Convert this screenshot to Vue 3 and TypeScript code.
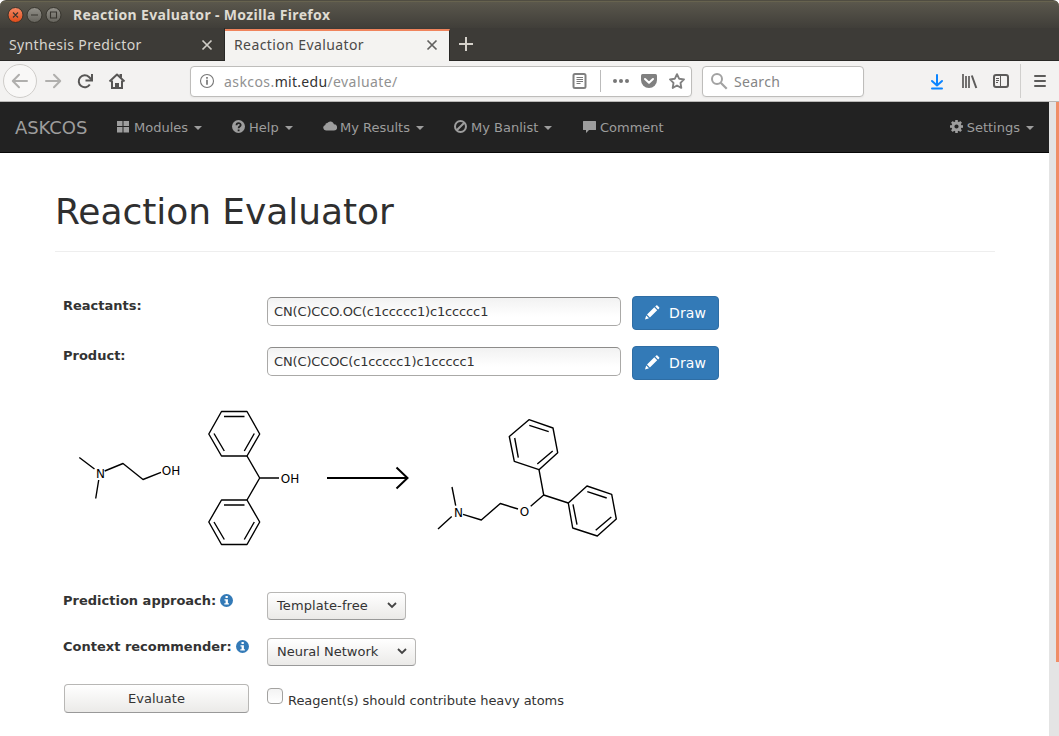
<script setup lang="ts">
interface NavItem { icon: string; label: string; caret: boolean }

const navItems: NavItem[] = [
  { icon: 'modules', label: 'Modules', caret: true },
  { icon: 'help', label: 'Help', caret: true },
  { icon: 'cloud', label: 'My Results', caret: true },
  { icon: 'ban', label: 'My Banlist', caret: true },
  { icon: 'comment', label: 'Comment', caret: false },
]

const fields = [
  { label: 'Reactants:', value: 'CN(C)CCO.OC(c1ccccc1)c1ccccc1' },
  { label: 'Product:', value: 'CN(C)CCOC(c1ccccc1)c1ccccc1' },
]

const options = [
  { label: 'Prediction approach:', value: 'Template-free', kind: 'narrow' },
  { label: 'Context recommender:', value: 'Neural Network', kind: 'wide' },
]

const gearTeeth = [0, 45, 90, 135, 180, 225, 270, 315]
</script>

<template>
  <div class="window">
    <header class="titlebar">
      <svg class="controls" width="62" height="28" viewBox="0 0 62 28">
        <defs>
          <linearGradient id="closeFill" x1="0" y1="0" x2="0" y2="1">
            <stop offset="0" stop-color="#f58a66" /><stop offset="1" stop-color="#df4a17" />
          </linearGradient>
          <linearGradient id="greyFill" x1="0" y1="0" x2="0" y2="1">
            <stop offset="0" stop-color="#93918a" /><stop offset="1" stop-color="#65635c" />
          </linearGradient>
        </defs>
        <circle cx="15.5" cy="14" r="7.5" fill="url(#closeFill)" stroke="#36322b" />
        <circle cx="34.5" cy="14" r="7.5" fill="url(#greyFill)" stroke="#36342d" />
        <circle cx="53.5" cy="14" r="7.5" fill="url(#greyFill)" stroke="#36342d" />
        <path d="M13 11.500l5 5M18 11.500l-5 5M31 14h7M50.500 11h6v6h-6z" fill="none" stroke="#37342e" stroke-width="1.100" />
      </svg>
      <span class="window-title">Reaction Evaluator - Mozilla Firefox</span>
    </header>

    <div class="tabs">
      <div class="tab">
        <span>Synthesis Predictor</span>
        <svg width="12" height="12" viewBox="0 0 12 12"><path d="M1.500 1.500l9 9M10.500 1.500l-9 9" stroke="#d0cdc7" stroke-width="1.7" /></svg>
      </div>
      <div class="tab active">
        <span>Reaction Evaluator</span>
        <svg width="12" height="12" viewBox="0 0 12 12"><path d="M1.500 1.500l9 9M10.500 1.500l-9 9" stroke="#62615f" stroke-width="1.7" /></svg>
      </div>
      <svg class="new-tab" width="16" height="16" viewBox="0 0 16 16"><path d="M1 8h14M8 1v14" stroke="#d5d1ca" stroke-width="2" /></svg>
    </div>

    <div class="toolbar">
      <svg class="nav-buttons" width="190" height="40" viewBox="0 0 190 40">
        <circle cx="20" cy="20" r="16.500" fill="#f9f8f7" stroke="#cfcdca" />
        <g fill="none" stroke-width="2" stroke-linecap="round" stroke-linejoin="round">
          <path d="M27 20H13.500M19 13.700L12.800 20l6.200 6.300" stroke="#b0afad" />
          <path d="M46 20h14M54 13.700l6.200 6.300-6.200 6.300" stroke="#b0afad" />
        </g>
        <g fill="none" stroke="#575655" stroke-width="2">
          <path d="M89.800 23.500a6 6 0 1 1-.8-7.500l2.500 2.500" />
          <path d="M92 13v6.500h-6.500" />
          <path d="M109.500 20.500L117 13.500l7.500 7" stroke-linejoin="round" />
          <path d="M112 19.500V27h10v-7.500" />
        </g>
        <path d="M115 28v-6h4v6zM119.500 15.500v-2.500h2.500v4z" fill="#575655" />
      </svg>

      <div class="address">
        <svg width="16" height="16" viewBox="0 0 16 16">
          <circle cx="8" cy="8" r="6.500" fill="none" stroke="#777" stroke-width="1.100" />
          <path d="M8 6.800v5M8 4v1.700" stroke="#777" stroke-width="1.700" />
        </svg>
        <span class="url">askcos.<b>mit.edu</b>/evaluate/</span>
        <svg class="address-actions" width="118" height="28" viewBox="0 0 118 28">
          <rect x="2.500" y="7" width="12" height="14" rx="1.500" fill="none" stroke="#808080" stroke-width="2" />
          <path d="M5.500 10.500h6.500M5.500 12.500h6.500M5.500 14.500h6.500M5.500 16.500h4" stroke="#777" />
          <path d="M29.500 3v22" stroke="#bbb" />
          <g fill="#777"><circle cx="44" cy="14" r="2" /><circle cx="50" cy="14" r="2" /><circle cx="56" cy="14" r="2" /></g>
          <path d="M71.500 7h13a1.500 1.500 0 0 1 1.500 1.500V13a8 8 0 0 1-16 0V8.500A1.500 1.500 0 0 1 71.500 7z" fill="#808080" />
          <path d="M74 12l4 3.800 4-3.800" fill="none" stroke="#fff" stroke-width="2" stroke-linecap="round" stroke-linejoin="round" />
          <path d="M106 7.200l2.100 4.500 4.900.7-3.500 3.500.8 5-4.300-2.400-4.300 2.400.8-5-3.500-3.500 4.900-.7z" fill="none" stroke="#808080" stroke-width="1.900" stroke-linejoin="round" />
        </svg>
      </div>

      <div class="search">
        <svg width="18" height="18" viewBox="0 0 18 18"><circle cx="7" cy="7" r="5" fill="none" stroke="#a2a2a2" stroke-width="2" /><path d="M10.700 10.700l6 6" stroke="#a2a2a2" stroke-width="2.200" /></svg>
        <span>Search</span>
      </div>

      <svg class="tools" width="129" height="40" viewBox="930 61 129 40">
        <g fill="none" stroke="#0a84ff" stroke-width="2" stroke-linecap="round" stroke-linejoin="round"><path d="M937 75v10.500M932 81l5 4.500 5-4.500" /><path d="M932 88.500h10" /></g>
        <path d="M963 74v14M966 76v12M969 76v12" stroke="#5c5b5a" stroke-width="1.700" />
        <path d="M971.800 75.500l4.500 12.500" stroke="#5c5b5a" stroke-width="2" />
        <rect x="994" y="75" width="14" height="12" rx="2" fill="none" stroke="#5c5b5a" stroke-width="2" />
        <path d="M1000.500 75v12M996 78.500h3M996 80.500h3M996 82.500h2" stroke="#5c5b5a" />
        <path d="M1020.500 64v34" stroke="#d0cfcd" />
        <path d="M1035 76h10M1035 81h10M1035 86h10" stroke="#5c5b5a" stroke-width="2" stroke-linecap="round" />
      </svg>
    </div>

    <div class="viewport">
      <main class="page">
        <nav class="navbar">
          <span class="brand">ASKCOS</span>
          <div v-for="item in navItems" :key="item.label" class="nav-item" :class="item.icon">
            <svg width="14" height="14" viewBox="0 0 14 14">
              <path v-if="item.icon === 'modules'" d="M0 1h5.500v5H0zM6.500 1H12v5H6.500zM0 7h5.500v5.500H0zM6.500 7H12v5.500H6.500z" fill="currentColor" />
              <g v-else-if="item.icon === 'help'">
                <circle cx="6.500" cy="6.500" r="6.500" fill="currentColor" />
                <path d="M4.500 5.200c0-2.700 4.200-2.600 4.200-.2 0 1.600-2.100 1.500-2.100 3.200M6.600 9.400v1.800" fill="none" stroke="#222" stroke-width="1.800" />
              </g>
              <path v-else-if="item.icon === 'cloud'" d="M3 10.500a2.800 2.800 0 0 1-.7-5.500 2 2 0 0 1 2-2A3.800 3.800 0 0 1 11 4.300 3.100 3.100 0 0 1 11 10.500z" fill="currentColor" />
              <g v-else-if="item.icon === 'ban'" fill="none" stroke="currentColor" stroke-width="2"><circle cx="6.500" cy="6.500" r="5.500" /><path d="M2.700 10.300l7.600-7.600" /></g>
              <path v-else d="M.5 1h12a.5.5 0 0 1 .5.5v8a.5.5 0 0 1-.5.500H6L3 13v-3H.5a.5.500 0 0 1-.5-.5v-8A.5.500 0 0 1 .5 1z" fill="currentColor" />
            </svg>
            <span>{{ item.label }}</span>
            <i v-if="item.caret" class="caret"></i>
          </div>
          <div class="nav-item settings">
            <svg width="14" height="14" viewBox="0 0 14 14">
              <circle cx="6.500" cy="6.500" r="3.500" fill="none" stroke="currentColor" stroke-width="2.800" />
              <path v-for="angle in gearTeeth" :key="angle" d="M5.200 0h2.600v3H5.200z" fill="currentColor" :transform="`rotate(${angle} 6.500 6.500)`" />
            </svg>
            <span>Settings</span>
            <i class="caret"></i>
          </div>
        </nav>

        <div class="container">
          <h1>Reaction Evaluator</h1>

          <div v-for="field in fields" :key="field.label" class="field">
            <label>{{ field.label }}</label>
            <input type="text" :value="field.value" />
            <button type="button" class="draw">
              <svg width="15" height="15" viewBox="0 0 15 15" fill="#fff">
                <path d="M0 14.500l1.200-4 2.800 2.800zM2 9.600L9.300 2.300l2.900 2.900-7.300 7.300zM10.200 1.500l1-1q.6-.6 1.200 0l1.700 1.700q.6.600 0 1.200l-1 1z" />
              </svg>
              <span>Draw</span>
            </button>
          </div>

          <svg class="reaction" width="940" height="180" viewBox="55 397 940 180">
            <g fill="none" stroke="#000" stroke-width="1.400" stroke-linejoin="round">
              <path d="M79.300 457.500L94.500 469M98.700 480L95.700 498.500M104.700 471L123 463.500L143 479.500L161 472.300" />
              <path d="M221.500 411.500H247L259.700 434L247 456H221.500L208.800 434ZM224 416.500H244.500M214 433.500L224.300 451M254.300 433.500L244.300 451" />
              <path d="M247 456L259.700 478L247 500M259.700 478H279" />
              <path d="M221.500 500H247L259.700 522L247 544.500H221.500L208.800 522ZM224 505H244.500M214 522L224.300 539.500M254.300 522L244.300 539.500" />
              <path d="M529 419.700L553 428L557.700 452.700L539 469.700L514.300 461.300L509.300 436.500ZM529.300 425.300L548.700 431.700M552.700 451L537.300 464M518.300 457.700L514.700 438" />
              <path d="M539 469.700L543.700 495L530.700 506.300M543.700 495L568.300 503" />
              <path d="M587 486L611.700 494.300L616.300 519L597.300 536L572.700 528L568.300 503ZM587.300 491.700L606.700 498M611.300 517L595.700 530.300M577 524.700L573 504.300" />
              <path d="M518 509L500.300 503.500L481.300 520L463 514.300M455.700 505.700L452 487M451.700 516.500L438 529" />
            </g>
            <path d="M327 478H407M396.500 467.500L407.500 478L396.500 488.500" fill="none" stroke="#000" stroke-width="2" />
            <g class="atoms">
              <text x="100.500" y="478">N</text><text x="171" y="475">OH</text><text x="290" y="483">OH</text>
              <text x="458.500" y="517">N</text><text x="524.500" y="516">O</text>
            </g>
          </svg>

          <div v-for="option in options" :key="option.label" class="option">
            <label>
              {{ option.label }}
              <svg width="13" height="13" viewBox="0 0 13 13"><circle cx="6.500" cy="6.500" r="6.500" fill="#337ab7" /><path d="M5.500 2h2.300v2H5.500zM4.500 5.200h3.400v4h1v1.300H4.300V9.200h1.300V6.500H4.500z" fill="#fff" /></svg>
            </label>
            <div class="select" :class="option.kind">
              <span>{{ option.value }}</span>
              <svg width="10" height="7" viewBox="0 0 10 7"><path d="M1 1l4 4 4-4" fill="none" stroke="#444" stroke-width="1.800" /></svg>
            </div>
          </div>

          <div class="submit">
            <button type="button" class="evaluate">Evaluate</button>
            <i class="checkbox"></i>
            <span>Reagent(s) should contribute heavy atoms</span>
          </div>
        </div>
      </main>
      <aside class="scrollbar"><div class="thumb"></div></aside>
    </div>
  </div>
</template>

<style>
body { margin: 0; overflow: hidden; }
</style>

<style scoped>
* { box-sizing: border-box; }
.window { width: 1059px; height: 736px; overflow: hidden; background: #fff; font-family: "DejaVu Sans", sans-serif; }
svg { display: block; flex: none; }
.titlebar, .tabs, .toolbar { font-family: "Noto Sans", sans-serif; white-space: nowrap; }
.titlebar { height: 28px; display: flex; align-items: center; background: linear-gradient(#5c594c 0, #57544a 4px, #403e39 27px); border-top: 1px solid #504d42; border-radius: 6px 6px 0 0; box-shadow: inset 0 1px #67634f; }
.window-title { margin-left: 11px; margin-top: 1px; color: #dfdbd2; font-size: 14px; font-weight: 700; line-height: 24px; letter-spacing: .34px; }
.tabs { height: 33px; display: flex; align-items: stretch; background: #3d3b37; border-bottom: 1px solid #292826; }
.tab { width: 225px; padding: 1px 11px 0 9px; display: flex; align-items: center; justify-content: space-between; color: #d8d5cf; font-size: 14px; letter-spacing: .36px; border-right: 1px solid #292826; }
.tab.active { height: 32px; color: #4b4a48; background: #f4f3f1; border-top: 2px solid #f0845c; margin-top: 1px; padding-top: 0; padding-bottom: 3px; letter-spacing: .4px; }
.new-tab { margin: 8px 0 0 8px; }
.toolbar { height: 41px; display: flex; align-items: flex-start; background: #f3f2f1; border-bottom: 1px solid #b9b8b6; }
.address, .search { height: 31px; margin-top: 5px; border: 1px solid #bebdbb; border-radius: 4px; background: #fff; box-shadow: 0 1px 2px #0000000d; display: flex; align-items: center; }
.address { width: 502px; padding: 0 2px 1px 8px; }
.url { margin-left: 9px; margin-top: 1px; color: #919191; font-size: 14px; letter-spacing: .42px; }
.url b { color: #333; font-weight: 400; letter-spacing: .3px; }
.address-actions { margin-left: auto; }
.search { width: 162px; margin-left: 10px; padding: 0 0 1px 7px; color: #858585; font-size: 14px; letter-spacing: .3px; }
.search span { margin-left: 6px; margin-top: 1px; }
.tools { margin-left: auto; }
.viewport { display: flex; height: 634px; }
.page { width: 1049px; background: #fff; }
.scrollbar { width: 10px; background: #e4e4e4; padding-left: 7px; }
.thumb { height: 560px; background: #f08e68; }
.navbar { height: 51px; background: #222; color: #9d9d9d; border-bottom: 1px solid #080808; display: flex; align-items: center; padding-left: 15px; }
.brand { width: 102px; font-size: 18px; line-height: 22px; margin-top: 1px; letter-spacing: -.08px; }
.nav-item { display: flex; align-items: center; margin-top: 2px; font-size: 13px; line-height: 18px; white-space: nowrap; }
.nav-item svg { margin: -2px 3px 0 0; }
.modules { width: 115px; } .help { width: 91px; } .cloud { width: 131px; } .ban { width: 129px; }
.settings { margin-left: auto; margin-right: 15px; }
.caret { border: 4px solid transparent; border-top-color: currentColor; border-bottom: 0; margin-left: 6px; }
.container { width: 940px; margin-left: 55px; }
h1 { height: 99px; margin: 0 0 44px; padding-top: 38px; border-bottom: 1px solid #eee; color: #2f2f2f; font-size: 36px; line-height: 42px; font-weight: 400; letter-spacing: -.05px; }
.field { height: 34px; margin-bottom: 16px; display: flex; align-items: flex-start; }
label { flex: none; width: 212px; padding-left: 8px; display: flex; align-items: center; gap: 4px; color: #333; font-size: 13px; font-weight: 700; line-height: 20px; white-space: nowrap; }
input { width: 354px; height: 29px; margin: 1px 11px 0 0; padding: 0 6px; border: 1px solid #aaa9a7; border-top-color: #8d8c8a; border-radius: 5px; background: linear-gradient(#f2f2f2, #fff 70%); color: #333; font: 13px "DejaVu Sans", sans-serif; letter-spacing: -.14px; }
.draw { width: 87px; height: 34px; padding: 0 0 0 12px; border: 1px solid #2e6da4; border-radius: 4px; background: #337ab7; color: #fff; display: flex; align-items: center; font: 14px "DejaVu Sans", sans-serif; }
.draw svg { margin-top: -2px; }
.draw span { margin-left: 9px; letter-spacing: .15px; }
.reaction { margin-top: 17px; }
.atoms { font: 12px "DejaVu Sans", sans-serif; text-anchor: middle; fill: #000; }
.option { display: flex; align-items: flex-start; height: 28px; margin-bottom: 18px; }
.reaction + .option { margin-top: 15px; }
.option label svg { margin-top: -2px; }
.option label { margin-top: -1px; }
.select { height: 28px; display: flex; align-items: center; justify-content: space-between; padding: 0 8px 1px 9px; font-size: 13px; color: #333; border: 1px solid #b8b7b5; border-bottom-color: #999; border-radius: 4px; background: linear-gradient(#fff, #ebeae8); }
.narrow { width: 139px; letter-spacing: .1px; }
.wide { width: 149px; }
.submit { display: flex; align-items: flex-start; color: #333; font-size: 13px; }
.evaluate { width: 185px; height: 29px; margin: 0 18px 0 9px; padding: 0; border: 1px solid #b8b7b5; border-bottom-color: #999; border-radius: 4px; background: linear-gradient(#fff, #ebeae8); color: #333; font: 13px "DejaVu Sans", sans-serif; }
.checkbox { width: 16px; height: 16px; margin: 4px 5px 0 0; border: 1px solid #a3a2a0; border-radius: 4px; background: linear-gradient(#f3f3f3, #fff); }
.submit span { line-height: 20px; margin-top: 7px; letter-spacing: -.04px; }
</style>
